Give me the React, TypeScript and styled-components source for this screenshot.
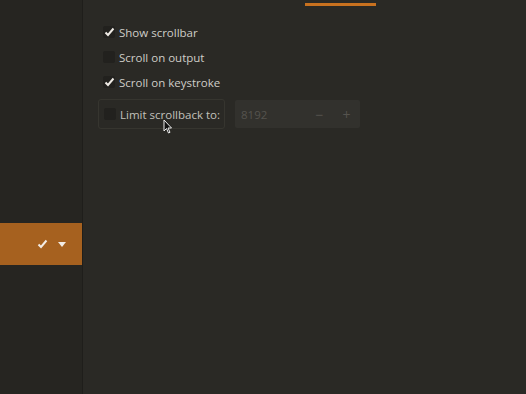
import styled, { createGlobalStyle } from 'styled-components';

const Global = createGlobalStyle`
  html, body { margin: 0; padding: 0; background: #2a2925; }
  body { font-family: "Open Sans", "Noto Sans", sans-serif; }
`;

const Window = styled.div`
  width: 526px;
  height: 394px;
  display: flex;
  background: #2a2925;
  overflow: hidden;
  position: relative;
`;

const Sidebar = styled.div`
  width: 83px;
  flex-shrink: 0;
  background: #262521;
  border-right: 1px solid #1f1e1b;
  display: flex;
  flex-direction: column;
  padding-top: 223px;
  box-sizing: border-box;
`;

const ProfileRow = styled.div`
  height: 42px;
  background: #a6611f;
  display: flex;
  align-items: center;
  justify-content: flex-end;
  gap: 10px;
  padding-right: 16px;
  color: #f3ece4;
`;

const Main = styled.div`
  flex: 1;
  display: flex;
  flex-direction: column;
`;

const TabStrip = styled.div`
  height: 7px;
  display: flex;
  padding-left: 222px;
`;

const ActiveTab = styled.div`
  width: 71px;
  height: 3px;
  margin-top: 3px;
  background: #c8711f;
`;

const Options = styled.div`
  display: flex;
  flex-direction: column;
  padding: 14px 0 0 15px;
  gap: 3px;
`;

const Row = styled.label`
  display: flex;
  align-items: center;
  gap: 4px;
  height: 22px;
  font-size: 11.5px;
  white-space: nowrap;
  color: #cfcdc8;
`;

const Box = styled.span<{ $checked?: boolean }>`
  width: 12px;
  height: 12px;
  border-radius: 2px;
  background: #22211e;
  display: flex;
  align-items: center;
  justify-content: center;
  margin-left: 5px;
  flex-shrink: 0;
`;

const LimitLine = styled.div`
  display: flex;
  align-items: center;
  gap: 10px;
  margin-top: 3px;
`;

const Frame = styled.div`
  width: 127px;
  height: 30px;
  box-sizing: border-box;
  border: 1px solid #36352f;
  border-radius: 3px;
  display: flex;
  align-items: center;
  gap: 4px;
  font-size: 11.5px;
  white-space: nowrap;
  color: #c3c1bc;
  position: relative;
`;

const Spin = styled.div`
  width: 125px;
  height: 28px;
  background: #32312d;
  border-radius: 2px;
  display: flex;
  align-items: center;
  font-size: 11.5px;
  color: #55534e;
`;

const SpinValue = styled.span`
  flex: 1;
  padding-left: 6px;
`;

const SpinButton = styled.span`
  width: 27px;
  text-align: center;
  font-size: 14px;
  color: #55534e;
`;

const Cursor = styled.svg`
  position: absolute;
  left: 64px;
  top: 19px;
`;

const Check = () => (
  <svg width="11" height="10" viewBox="0 0 11 10">
    <path d="M1.5 5.5 L4 8 L9.5 1.5" stroke="#eeeae4" strokeWidth="2" fill="none" />
  </svg>
);

const App = () => (
  <Window>
    <Global />
    <Sidebar>
      <ProfileRow>
        <svg width="11" height="10" viewBox="0 0 11 10">
          <path d="M1.5 5.5 L4 8 L9.5 1.5" stroke="#f3ece4" strokeWidth="2" fill="none" />
        </svg>
        <svg width="8" height="5" viewBox="0 0 8 5">
          <path d="M0 0 H8 L4 5 Z" fill="#f3ece4" />
        </svg>
      </ProfileRow>
    </Sidebar>
    <Main>
      <TabStrip>
        <ActiveTab />
      </TabStrip>
      <Options>
        <Row>
          <Box $checked><Check /></Box>
          Show scrollbar
        </Row>
        <Row>
          <Box />
          Scroll on output
        </Row>
        <Row>
          <Box $checked><Check /></Box>
          Scroll on keystroke
        </Row>
        <LimitLine>
          <Frame>
            <Box />
            Limit scrollback to:
            <Cursor width="10" height="16" viewBox="0 0 10 16">
              <path d="M1 1 L1 12 L3.5 9.5 L5.5 14 L7 13.3 L5 9 L8.5 9 Z" fill="#111" stroke="#eee" strokeWidth="1" />
            </Cursor>
          </Frame>
          <Spin>
            <SpinValue>8192</SpinValue>
            <SpinButton>−</SpinButton>
            <SpinButton>+</SpinButton>
          </Spin>
        </LimitLine>
      </Options>
    </Main>
  </Window>
);

export default App;
